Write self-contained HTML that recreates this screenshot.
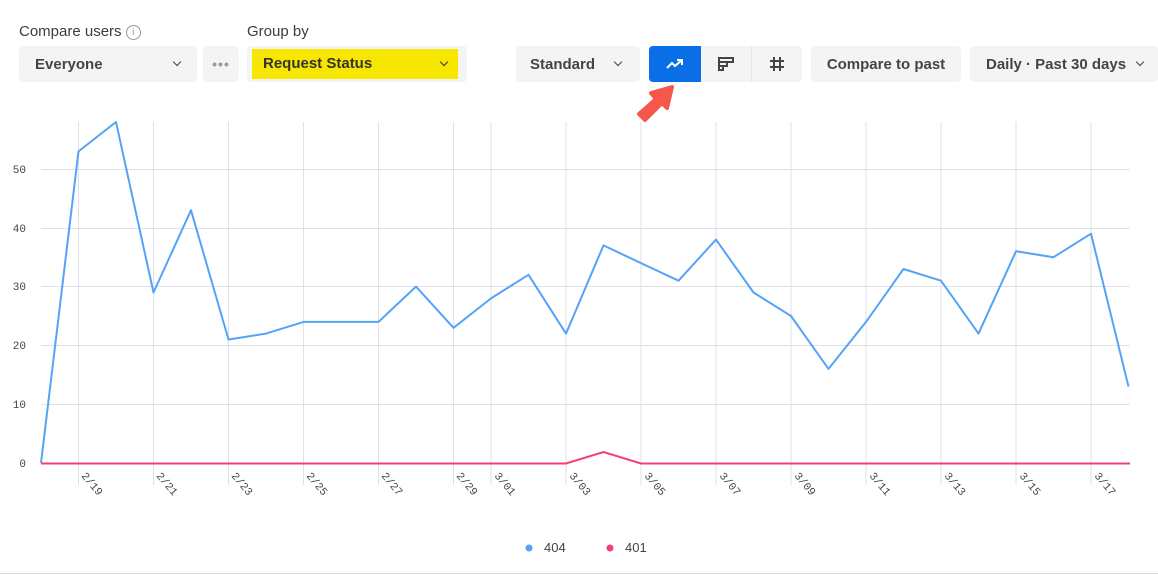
<!DOCTYPE html>
<html><head><meta charset="utf-8"><style>
body{margin:0;width:1158px;height:577px;background:#fff;font-family:"Liberation Sans",sans-serif;overflow:hidden;position:relative}
.lbl{position:absolute;top:23px;font-size:15px;color:#3c3c3c}
.btn{position:absolute;top:46px;height:36px;background:#f4f4f4;border-radius:4px;font-size:15px;font-weight:bold;color:#444;display:flex;align-items:center;box-sizing:border-box}
.chev{position:absolute;width:5px;height:5px;border-right:1.6px solid #444;border-bottom:1.6px solid #444;transform:rotate(45deg)}
</style></head><body>
<div class="lbl" style="left:19px">Compare users <span style="display:inline-block;width:13px;height:13px;border:1px solid #8a9aa8;border-radius:50%;font-size:10px;text-align:center;line-height:13px;color:#8a9aa8;font-weight:normal;vertical-align:1px">i</span></div>
<div class="lbl" style="left:247px">Group by</div>
<div class="btn" style="left:19px;width:178px;padding-left:16px">Everyone<span class="chev" style="left:155px;top:13px"></span></div>
<div class="btn" style="left:203px;width:36px;justify-content:center;color:#999;letter-spacing:1px;font-size:14px">•••</div>
<div class="btn" style="left:247px;width:220px"><div style="position:absolute;left:5px;top:3px;width:206px;height:30px;background:#f6e600;padding-left:11px;box-sizing:border-box;line-height:30px;color:#333">Request Status<span class="chev" style="left:189px;top:10px;border-color:#333"></span></div></div>
<div class="btn" style="left:516px;width:124px;padding-left:14px">Standard<span class="chev" style="left:99px;top:13px"></span></div>
<div class="btn" style="left:649px;width:153px;padding:0">
 <div style="width:52px;height:36px;background:#0a6fe6;border-radius:4px 0 0 4px;display:flex;align-items:center;justify-content:center"><svg width="20" height="14"><path d="M2 11 L7 6 L10 9 L17 3 M12 3 H17 V8" stroke="#fff" stroke-width="2" fill="none"/></svg></div>
 <div style="width:50px;height:36px;display:flex;align-items:center;justify-content:center;border-right:1px solid #e6e6e6"><svg width="20" height="18"><path d="M3 3 H17 V7 H11 V11 H7 V15 H3 Z M3 7 H11 M3 11 H7" stroke="#444" stroke-width="2" fill="none"/></svg></div>
 <div style="width:50px;height:36px;display:flex;align-items:center;justify-content:center"><svg width="18" height="18"><path d="M6 2 V16 M12 2 V16 M2 6 H16 M2 12 H16" stroke="#444" stroke-width="2"/></svg></div>
</div>
<div class="btn" style="left:811px;width:150px;justify-content:center">Compare to past</div>
<div class="btn" style="left:970px;width:188px;padding-left:16px">Daily · Past 30 days<span class="chev" style="left:167px;top:13px"></span></div>
<svg width="1158" height="577" style="position:absolute;left:0;top:0" font-family="Liberation Mono, monospace" font-size="11" fill="#444">
<path d="M639 114 L656 99 L651 93 L672 87 L667 108 L662 103 L645 120 Z" fill="#f5574a" stroke="#f5574a" stroke-width="4" stroke-linejoin="round"/>
<g stroke="#dfe0e8" stroke-width="1">
<path d="M41 169.5H1130M41 228.5H1130M41 286.5H1130M41 345.5H1130M41 404.5H1130"/>
<path d="M78.5 122V485M153.5 122V485M228.5 122V485M303.5 122V485M378.5 122V485M453.5 122V485M491 122V485M566 122V485M641 122V485M716 122V485M791 122V485M866 122V485M941 122V485M1016 122V485M1091 122V485"/>
</g>
<g text-anchor="end"><text x="26" y="173">50</text><text x="26" y="232">40</text><text x="26" y="290">30</text><text x="26" y="349">20</text><text x="26" y="408">10</text><text x="26" y="467">0</text></g>
<polyline fill="none" stroke="#55a3f7" stroke-width="2" stroke-linejoin="round" points="41,463 78.5,151.4 116,122 153.5,292.5 191,210.2 228.5,339.5 266,333.6 303.5,321.9 341,321.9 378.5,321.9 416,286.6 453.5,327.8 491,298.4 528.5,274.8 566,333.6 603.5,245.4 641,263.1 678.5,280.7 716,239.6 753.5,292.5 791,316 828.5,368.9 866,321.9 903.5,269 941,280.7 978.5,333.6 1016,251.3 1053.5,257.2 1091,233.7 1128.5,386.6"/>
<polyline fill="none" stroke="#f2406f" stroke-width="2" points="41,463.5 566,463.5 603.5,452 641,463.5 1130,463.5"/>
<g font-size="11">
<text transform="translate(81,476) rotate(50)">2/19</text>
<text transform="translate(156,476) rotate(50)">2/21</text>
<text transform="translate(231,476) rotate(50)">2/23</text>
<text transform="translate(306,476) rotate(50)">2/25</text>
<text transform="translate(381,476) rotate(50)">2/27</text>
<text transform="translate(456,476) rotate(50)">2/29</text>
<text transform="translate(494,476) rotate(50)">3/01</text>
<text transform="translate(569,476) rotate(50)">3/03</text>
<text transform="translate(644,476) rotate(50)">3/05</text>
<text transform="translate(719,476) rotate(50)">3/07</text>
<text transform="translate(794,476) rotate(50)">3/09</text>
<text transform="translate(869,476) rotate(50)">3/11</text>
<text transform="translate(944,476) rotate(50)">3/13</text>
<text transform="translate(1019,476) rotate(50)">3/15</text>
<text transform="translate(1094,476) rotate(50)">3/17</text>
</g>
<circle cx="529" cy="548" r="3.5" fill="#55a3f7"/><text x="544" y="552" font-family="Liberation Sans,sans-serif" font-size="13">404</text>
<circle cx="610" cy="548" r="3.5" fill="#f2406f"/><text x="625" y="552" font-family="Liberation Sans,sans-serif" font-size="13">401</text>
<path d="M0 573.5H1158" stroke="#d8d8de"/>
</svg>
</body></html>
